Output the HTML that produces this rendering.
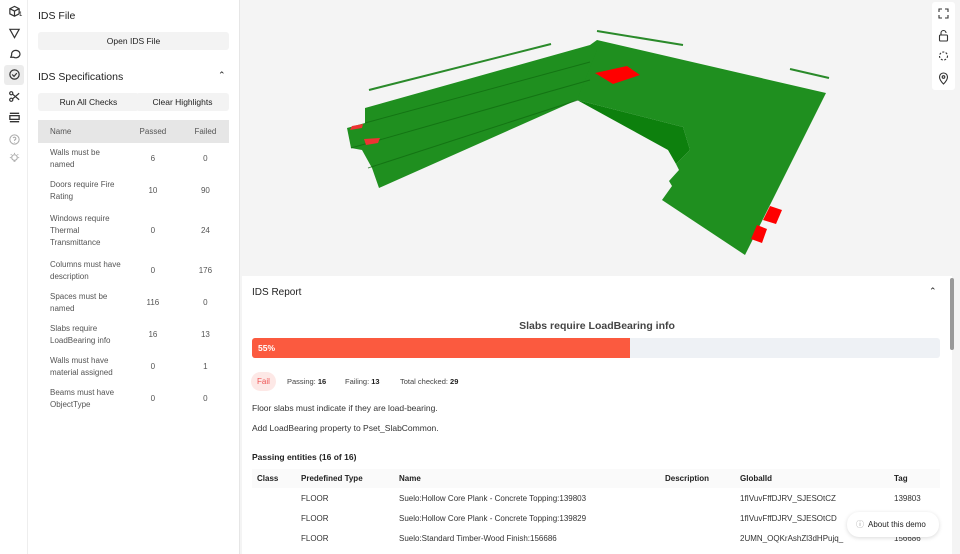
<!DOCTYPE html>
<html><head><meta charset="utf-8"><style>
*{box-sizing:border-box;margin:0;padding:0}
body{width:960px;height:554px;overflow:hidden;background:#f4f4f4;font-family:"Liberation Sans",sans-serif;color:#222;position:relative}
.abs{position:absolute}
.rail{left:0;top:0;width:28px;height:554px;background:#fff;border-right:1px solid #eee}
.panel{left:28px;top:0;width:212px;height:554px;background:#fff;border-right:1px solid #e6e6e6}
.btn{position:absolute;background:#f3f3f3;border-radius:3px;font-size:8.5px;text-align:center;color:#222}
.ic{position:absolute;left:8px;width:13px;height:13px}
table{border-collapse:collapse}
.spec td{font-size:8px;color:#555;line-height:12px;vertical-align:middle}
.rep{left:242px;top:276px;width:710px;height:278px;background:#fff}
.ent{table-layout:fixed}
.ent th{font-size:8px;font-weight:bold;text-align:left;color:#222;height:19px;background:#fafafa;padding:0}
.ent td{font-size:8px;color:#333;height:20px;padding:0;white-space:nowrap;overflow:hidden}
</style></head><body>
<div class="abs rail">
 <svg class="ic" style="top:5px" viewBox="0 0 14 14" fill="none" stroke="#333" stroke-width="1.3"><path d="M7 1.5l5 2.5v5.5l-5 2.5-5-2.5V4z M2 4l5 2.5 5-2.5 M7 6.5V12"/></svg>
 <span class="abs" style="left:19px;top:12px;font-size:6px">1</span>
 <svg class="ic" style="top:27px" viewBox="0 0 14 14" fill="none" stroke="#333" stroke-width="1.3"><path d="M2 2.5h10l-5 9z"/></svg>
 <svg class="ic" style="top:47px" viewBox="0 0 14 14" fill="none" stroke="#333" stroke-width="1.3"><path d="M3 11l1-2.5A4.5 4 0 1 1 6 11z"/></svg>
 <div class="abs" style="left:4px;top:65px;width:20px;height:20px;background:#ececec;border-radius:3px"></div>
 <svg class="ic" style="top:68px" viewBox="0 0 14 14" fill="none" stroke="#333" stroke-width="1.3"><circle cx="7" cy="7" r="5"/><path d="M4.5 7l2 2 3-3.5"/></svg>
 <svg class="ic" style="top:90px" viewBox="0 0 14 14" fill="none" stroke="#333" stroke-width="1.3"><circle cx="3.5" cy="3.5" r="1.7"/><circle cx="3.5" cy="10.5" r="1.7"/><path d="M5 4.5l7 6M5 9.5l7-6"/></svg>
 <svg class="ic" style="top:111px" viewBox="0 0 14 14" fill="none" stroke="#333" stroke-width="1.4"><path d="M2 2.5h10M2 11.5h10"/><rect x="2" y="5" width="10" height="4"/></svg>
 <svg class="ic" style="top:133px" viewBox="0 0 14 14" fill="none" stroke="#aaa" stroke-width="1.1"><circle cx="7" cy="7" r="5"/><path d="M5.5 5.5a1.5 1.5 0 1 1 1.5 2v1M7 10v.5"/></svg>
 <svg class="ic" style="top:152px" viewBox="0 0 14 14" fill="none" stroke="#aaa" stroke-width="1.1"><circle cx="7" cy="6" r="3"/><path d="M6 10h2M7 1v1M2 6h1M11 6h1M3 2.5l.8.8M11 2.5l-.8.8"/></svg>
</div>
<div class="abs panel">
 <div class="abs" style="left:10px;top:10px;font-size:10.5px;color:#222">IDS File</div>
 <div class="btn" style="left:10px;top:32px;width:191px;height:18px;line-height:18px">Open IDS File</div>
 <div class="abs" style="left:10px;top:71px;font-size:10.5px">IDS Specifications</div>
 <div class="abs" style="left:190px;top:70px;font-size:9px">&#8963;</div>
 <div class="btn" style="left:10px;top:93px;width:101px;height:18px;line-height:18px">Run All Checks</div>
 <div class="btn" style="left:108px;top:93px;width:93px;height:18px;line-height:18px">Clear Highlights</div>
 <table class="spec abs" style="left:10px;top:120px;width:191px">
  <tr style="background:#e6e6e6;height:23px"><td style="padding-left:12px;width:86px">Name</td><td style="text-align:center">Passed</td><td style="text-align:center">Failed</td></tr>
  <tr style="height:32px"><td style="padding-left:12px">Walls must be<br>named</td><td style="text-align:center">6</td><td style="text-align:center">0</td></tr>
  <tr style="height:32px"><td style="padding-left:12px">Doors require Fire<br>Rating</td><td style="text-align:center">10</td><td style="text-align:center">90</td></tr>
  <tr style="height:48px"><td style="padding-left:12px">Windows require<br>Thermal<br>Transmittance</td><td style="text-align:center">0</td><td style="text-align:center">24</td></tr>
  <tr style="height:32px"><td style="padding-left:12px">Columns must have<br>description</td><td style="text-align:center">0</td><td style="text-align:center">176</td></tr>
  <tr style="height:32px"><td style="padding-left:12px">Spaces must be<br>named</td><td style="text-align:center">116</td><td style="text-align:center">0</td></tr>
  <tr style="height:32px"><td style="padding-left:12px">Slabs require<br>LoadBearing info</td><td style="text-align:center">16</td><td style="text-align:center">13</td></tr>
  <tr style="height:32px"><td style="padding-left:12px">Walls must have<br>material assigned</td><td style="text-align:center">0</td><td style="text-align:center">1</td></tr>
  <tr style="height:32px"><td style="padding-left:12px">Beams must have<br>ObjectType</td><td style="text-align:center">0</td><td style="text-align:center">0</td></tr>
 </table>
</div>
<svg class="abs" style="left:0;top:0" width="960" height="276">
 <polygon points="590,45 597,40 826,93 745,255 662,200 672,186 669,181 679,170 676,164 690,150 683,127 577,100" fill="#1f8f1f"/>
 <polygon points="577,100 683,127 690,150 676,164 668,150" fill="#0d800d"/>
 <polygon points="365,108 590,45 597,50 577,100 379,188 372,168 362,150 351,148 347,128 365,123" fill="#1f8f1f"/>
 <g stroke="#0f6a0f" stroke-width="1" opacity=".7"><line x1="365" y1="123" x2="590" y2="62"/><line x1="351" y1="148" x2="590" y2="80"/><line x1="368" y1="168" x2="578" y2="100"/></g>
 <polygon points="595,73 627,66 640,75 613,84" fill="#f00"/>
 <polygon points="770,206 782,210 776,224 763,220" fill="#f00"/>
 <polygon points="757,225 767,229 762,243 751,239" fill="#f00"/>
 <polygon points="352,126 363,124 362,128 350,130" fill="#e33"/>
 <polygon points="364,139 380,138 378,143 366,145" fill="#e33"/>
 <g stroke="#2a8a2a" stroke-width="2"><line x1="369" y1="90" x2="551" y2="44"/><line x1="597" y1="31" x2="683" y2="45"/><line x1="790" y1="69" x2="829" y2="78"/></g>
</svg>
<div class="abs" style="left:932px;top:2px;width:23px;height:88px;background:#fff;border-radius:3px"></div>
<svg class="abs" style="left:937px;top:7px" width="13" height="80" viewBox="0 0 13 80" fill="none" stroke="#333" stroke-width="1.1">
 <path d="M2 5V2h3M8 2h3v3M11 8v3H8M5 11H2V8"/>
 <rect x="2.5" y="28" width="8" height="6" rx="1"/><path d="M4 28v-2a2.5 2.5 0 0 1 5 0"/>
 <circle cx="6.5" cy="49" r="4" stroke-dasharray="2 1.5"/>
 <path d="M6.5 77s-4-4-4-7a4 4 0 0 1 8 0c0 3-4 7-4 7z"/><circle cx="6.5" cy="70" r="1.3"/>
</svg>
<div class="abs rep">
 <div class="abs" style="left:10px;top:11px;font-size:10px">IDS Report</div>
 <div class="abs" style="left:687px;top:10px;font-size:9px">&#8963;</div>
 <div class="abs" style="left:0;width:710px;top:44px;text-align:center;font-size:10.5px;font-weight:bold;color:#444">Slabs require LoadBearing info</div>
 <div class="abs" style="left:10px;top:62px;width:688px;height:20px;background:#eef1f5;border-radius:3px"></div>
 <div class="abs" style="left:10px;top:62px;width:378px;height:20px;background:#fb5a3f;border-radius:3px 0 0 3px;color:#fff;font-size:8.5px;font-weight:bold;line-height:20px;padding-left:6px">55%</div>
 <div class="abs" style="left:9px;top:96px;width:25px;height:19px;border-radius:10px;background:#fde8e6;color:#e55;font-size:8px;line-height:19px;text-align:center">Fail</div>
 <div class="abs" style="left:45px;top:101px;font-size:7.5px;color:#444">Passing: <b style="color:#222">16</b></div>
 <div class="abs" style="left:103px;top:101px;font-size:7.5px;color:#444">Failing: <b style="color:#222">13</b></div>
 <div class="abs" style="left:158px;top:101px;font-size:7.5px;color:#444">Total checked: <b style="color:#222">29</b></div>
 <div class="abs" style="left:10px;top:127px;font-size:8.5px;color:#333">Floor slabs must indicate if they are load-bearing.</div>
 <div class="abs" style="left:10px;top:147px;font-size:8.5px;color:#333">Add LoadBearing property to Pset_SlabCommon.</div>
 <div class="abs" style="left:10px;top:176px;font-size:8.5px;font-weight:bold">Passing entities (16 of 16)</div>
 <table class="ent abs" style="left:10px;top:193px;width:688px">
  <colgroup><col style="width:49px"><col style="width:98px"><col style="width:266px"><col style="width:75px"><col style="width:154px"><col></colgroup>
  <tr><th style="padding-left:5px">Class</th><th>Predefined Type</th><th>Name</th><th>Description</th><th>GlobalId</th><th>Tag</th></tr>
  <tr><td></td><td>FLOOR</td><td>Suelo:Hollow Core Plank - Concrete Topping:139803</td><td></td><td>1fIVuvFffDJRV_SJESOtCZ</td><td>139803</td></tr>
  <tr><td></td><td>FLOOR</td><td>Suelo:Hollow Core Plank - Concrete Topping:139829</td><td></td><td>1fIVuvFffDJRV_SJESOtCD</td><td>139829</td></tr>
  <tr><td></td><td>FLOOR</td><td>Suelo:Standard Timber-Wood Finish:156686</td><td></td><td>2UMN_OQKrAshZl3dHPujq_</td><td>156686</td></tr>
 </table>
</div>
<div class="abs" style="left:950px;top:278px;width:4px;height:72px;background:#999;border-radius:2px"></div>
<div class="abs" style="left:847px;top:512px;width:92px;height:25px;background:#fff;border-radius:12px;box-shadow:0 1px 4px rgba(0,0,0,.15);font-size:8px;line-height:25px;padding-left:9px;color:#222"><span style="color:#999;font-size:8px">&#9432;</span>&nbsp; About this demo</div>
</body></html>
